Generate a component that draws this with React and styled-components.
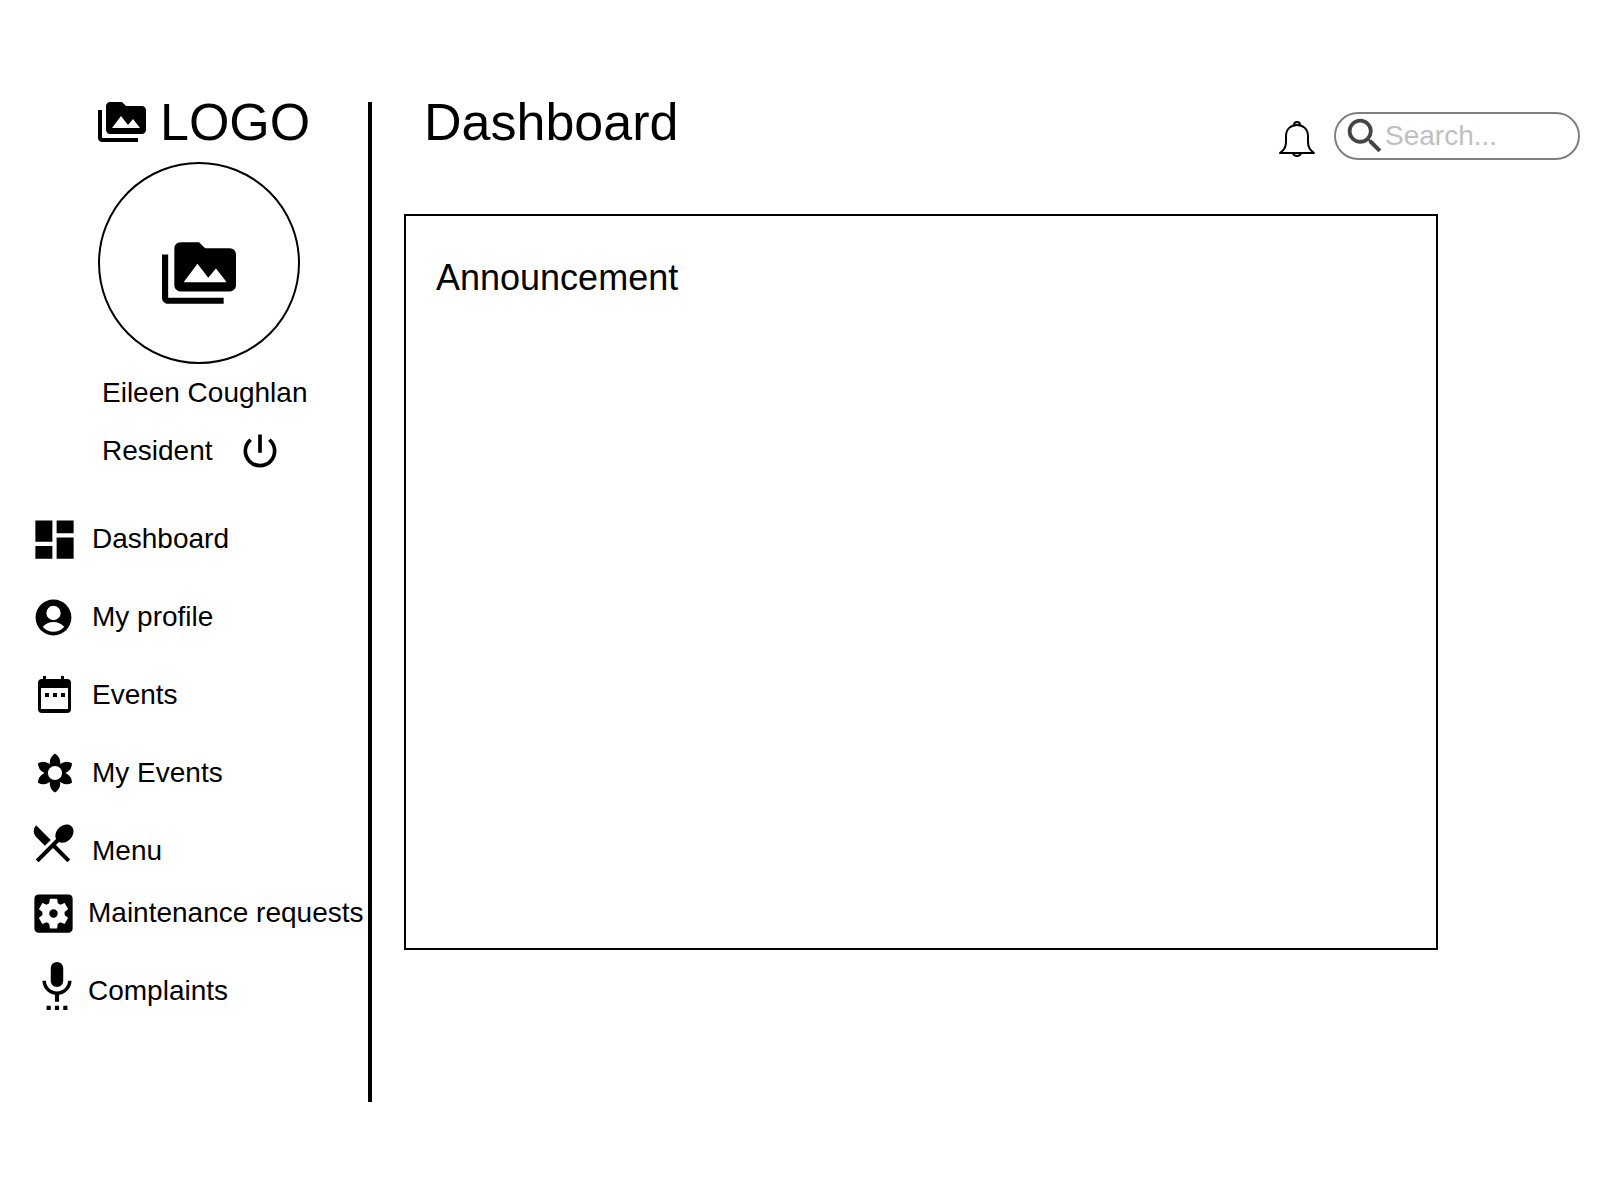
import React from "react";
import styled, { createGlobalStyle } from "styled-components";
import {
  MdPermMedia, MdDashboard, MdFilterVintage, MdRestaurantMenu,
  MdSettingsApplications, MdSettingsVoice, MdPowerSettingsNew, MdSearch,
} from "react-icons/md";

const Global = createGlobalStyle`
  html, body { margin: 0; padding: 0; background: #fff; }
  body { font-family: "Liberation Sans", Arial, sans-serif; color: #000; }
`;

const Page = styled.div`
  width: 1600px;
  height: 1200px;
  display: flex;
  align-items: flex-start;
  padding-top: 98px;
  box-sizing: border-box;
`;

const Sidebar = styled.aside`
  width: 372px;
  height: 1004px;
  box-sizing: border-box;
  flex: none;
  display: flex;
  flex-direction: column;
  position: relative;
`;

const Divider = styled.div`
  position: absolute;
  top: 4px;
  right: 0;
  bottom: 0;
  width: 4px;
  background: #000;
`;

const Brand = styled.div`
  display: flex;
  align-items: center;
  height: 48px;
  padding-left: 98px;
  gap: 14px;
  font-size: 52px;
`;

const BrandName = styled.span`
  margin-bottom: 1px;
`;

const Avatar = styled.div`
  width: 202px;
  height: 202px;
  margin: 16px 0 0 98px;
  box-sizing: border-box;
  border: 2px solid #000;
  border-radius: 50%;
  display: flex;
  align-items: center;
  justify-content: center;
  padding-top: 20px;
`;

const Person = styled.div`
  font-size: 28px;
  padding-left: 102px;
  display: flex;
  align-items: center;
  height: 58px;
  gap: 25px;
`;

const Nav = styled.nav`
  display: flex;
  flex-direction: column;
  margin-top: 20px;
`;

const NavRow = styled.div`
  display: flex;
  align-items: center;
  height: ${(p) => p.$height || 78}px;
  font-size: 28px;
`;

const IconSlot = styled.span`
  width: ${(p) => p.$width}px;
  box-sizing: border-box;
  padding-left: ${(p) => p.$shift * 2}px;
  flex: none;
  display: flex;
  justify-content: center;
  margin-top: ${(p) => p.$lift || 0}px;
`;

const Main = styled.main`
  flex: 1;
  min-width: 0;
  display: flex;
  flex-direction: column;
`;

const Header = styled.header`
  position: relative;
  height: 48px;
  display: flex;
  align-items: center;
  padding-left: 52px;
`;

const Title = styled.h1`
  margin: 0 0 1px;
  font-size: 52px;
  font-weight: 400;
  line-height: 48px;
`;

const Tools = styled.div`
  position: absolute;
  left: 906px;
  top: 14px;
  display: flex;
  align-items: center;
  gap: 18px;
`;

const BellWrap = styled.span`
  display: flex;
  margin-top: 6px;
`;

const SearchBox = styled.div`
  width: 246px;
  height: 48px;
  box-sizing: border-box;
  border: 2px solid #808080;
  border-radius: 24px;
  display: flex;
  align-items: center;
  padding-left: 6px;
  color: #444;
  font-size: 28px;
`;

const Placeholder = styled.span`
  color: #c0c0c0;
  margin-left: -3px;
`;

const Card = styled.section`
  margin: 68px 0 0 32px;
  width: 1034px;
  height: 736px;
  box-sizing: border-box;
  border: 2px solid #000;
  padding: 41px 0 0 30px;
`;

const CardTitle = styled.h2`
  margin: 0;
  font-size: 36px;
  font-weight: 400;
  line-height: 42px;
`;

const Bell = () => (
  <svg width="38" height="40" viewBox="0 0 38 40" fill="none" stroke="#000" strokeWidth="2" strokeLinejoin="round">
    <path d="M2 34c3-2 6-5 6-11v-6C8 10 13 6 19 6s11 4 11 11v6c0 6 3 9 6 11z" />
    <path d="M16 6c0-4 6-4 6 0" />
    <path d="M15 34c1 4 7 4 8 0" />
  </svg>
);

const Calendar = () => (
  <svg width="35" height="38" viewBox="0 0 35 38">
    <path
      fill="#000"
      fillRule="evenodd"
      d="M6 0h3v3h15V0h3v3h3a4 4 0 0 1 4 4v26a4 4 0 0 1-4 4H5a4 4 0 0 1-4-4V7a4 4 0 0 1 4-4h1zM4 12v21h27V12z"
    />
    <path fill="#000" d="M8 17h4v4H8zM16 17h4v4h-4zM24 17h4v4h-4z" />
  </svg>
);

const Account = () => (
  <svg width="43" height="43" viewBox="0 0 24 24">
    <path
      fill="#000"
      fillRule="evenodd"
      d="M12 2C6.480 2 2 6.480 2 12s4.480 10 10 10 10-4.480 10-10S17.520 2 12 2zm0 3.500a4 4 0 1 1 0 8 4 4 0 0 1 0-8zm0 14.500c-2.300 0-4.500-1-6-2.800 1.500-1.800 3.700-2.700 6-2.700s4.500.900 6 2.700c-1.500 1.800-3.700 2.800-6 2.800z"
    />
  </svg>
);

const items = [
  { label: "Dashboard", width: 92, shift: 8.5, icon: <MdDashboard size={51} /> },
  { label: "My profile", width: 92, shift: 7.5, icon: <Account /> },
  { label: "Events", width: 92, shift: 8.5, icon: <Calendar /> },
  { label: "My Events", width: 92, shift: 9, icon: <MdFilterVintage size={42} /> },
  { label: "Menu", width: 92, shift: 7, lift: -16, icon: <MdRestaurantMenu size={50} /> },
  { label: "Maintenance requests", width: 88, shift: 9, icon: <MdSettingsApplications size={51} />, height: 46 },
  { label: "Complaints", width: 88, shift: 13, lift: -13, icon: <MdSettingsVoice size={50} />, height: 110 },
];

export default function App() {
  return (
    <>
      <Global />
      <Page>
        <Sidebar>
          <Brand>
            <MdPermMedia size={48} />
            <BrandName>LOGO</BrandName>
          </Brand>
          <Avatar>
            <MdPermMedia size={74} />
          </Avatar>
          <Person>Eileen Coughlan</Person>
          <Person>
            <span>Resident</span>
            <MdPowerSettingsNew size={44} />
          </Person>
          <Nav>
            {items.map((item) => (
              <NavRow key={item.label} $height={item.height}>
                <IconSlot $width={item.width} $shift={item.shift} $lift={item.lift}>{item.icon}</IconSlot>
                <span>{item.label}</span>
              </NavRow>
            ))}
          </Nav>
          <Divider />
        </Sidebar>
        <Main>
          <Header>
            <Title>Dashboard</Title>
            <Tools>
              <BellWrap><Bell /></BellWrap>
              <SearchBox>
                <MdSearch size={46} />
                <Placeholder>Search...</Placeholder>
              </SearchBox>
            </Tools>
          </Header>
          <Card>
            <CardTitle>Announcement</CardTitle>
          </Card>
        </Main>
      </Page>
    </>
  );
}
